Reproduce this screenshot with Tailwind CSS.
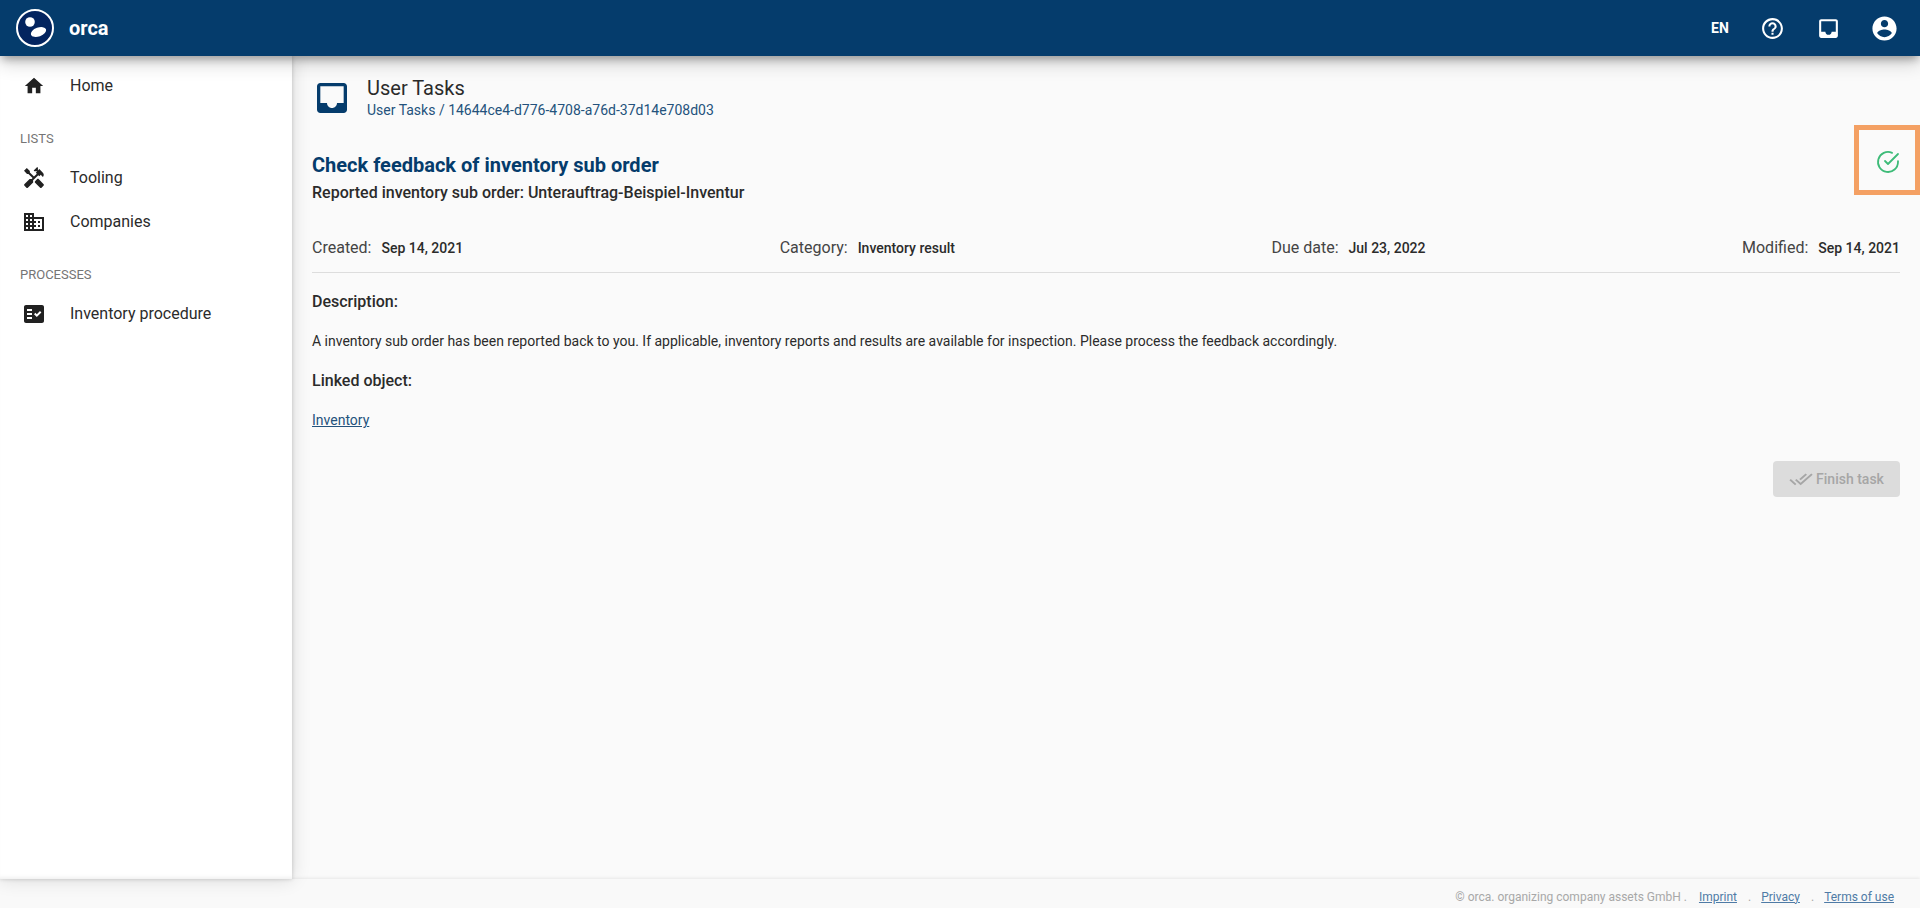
<!DOCTYPE html>
<html lang="en">
<head>
    <meta charset="UTF-8">
    <title>User Tasks</title>
    <script src="https://cdn.jsdelivr.net/npm/@tailwindcss/browser@4"></script>
</head>
<body class="h-[908px] overflow-hidden bg-[#fafafa] font-['Roboto',sans-serif] text-[#2b2b2b]">
    <!-- header -->
    <header class="relative z-20 h-[56px] bg-[#053c6c] text-white flex items-center justify-between shadow-[0_5px_8px_-2px_rgba(0,0,0,0.3),0_8px_18px_0_rgba(0,0,0,0.16)]">
        <div class="flex items-center pl-[16px]">
            <svg class="w-[39px] h-[39px]" viewBox="0 0 39 39">
                <circle cx="19" cy="19" r="18" fill="#03245f" stroke="#fff" stroke-width="2"/>
                <circle cx="14" cy="13" r="4.8" fill="#fff"/>
                <ellipse cx="22.5" cy="23" rx="8" ry="4.4" fill="#fff" transform="rotate(-20 22.5 23)"/>
            </svg>
            <span class="ml-[14px] text-[20px] font-bold">orca</span>
        </div>
        <div class="flex items-center pr-[8px]">
            <span class="w-[56px] pl-[8px] text-center text-[14px] font-bold">EN</span>
            <div class="w-[56px] flex justify-center">
                <svg class="w-[25px] h-[25px] fill-white" viewBox="0 0 24 24"><path d="M11 18h2v-2h-2v2zm1-16C6.48 2 2 6.48 2 12s4.48 10 10 10 10-4.48 10-10S17.52 2 12 2zm0 18c-4.41 0-8-3.59-8-8s3.59-8 8-8 8 3.59 8 8-3.59 8-8 8zm0-14c-2.21 0-4 1.79-4 4h2c0-1.1.9-2 2-2s2 .9 2 2c0 2-3 1.75-3 5h2c0-2.25 3-2.5 3-5 0-2.21-1.79-4-4-4z"/></svg>
            </div>
            <div class="w-[56px] flex justify-center">
                <svg class="w-[25px] h-[25px] fill-white" viewBox="0 0 24 24"><path d="M19 3H4.99c-1.11 0-1.98.89-1.98 2L3 19c0 1.1.88 2 1.99 2H19c1.1 0 2-.9 2-2V5c0-1.11-.9-2-2-2zm0 12h-4c0 1.66-1.35 3-3 3s-3-1.34-3-3H4.99V5H19v10z"/></svg>
            </div>
            <div class="w-[56px] flex justify-center">
                <svg class="w-[29px] h-[29px] fill-white" viewBox="0 0 24 24"><path d="M12 2C6.48 2 2 6.48 2 12s4.48 10 10 10 10-4.48 10-10S17.52 2 12 2zm0 3c1.66 0 3 1.34 3 3s-1.34 3-3 3-3-1.34-3-3 1.34-3 3-3zm0 14.2c-2.5 0-4.71-1.28-6-3.22.03-1.99 4-3.08 6-3.08 1.99 0 5.97 1.09 6 3.08-1.29 1.94-3.5 3.22-6 3.22z"/></svg>
            </div>
        </div>
    </header>

    <div class="flex h-[823px]">
        <!-- sidebar -->
        <aside class="relative z-10 w-[292px] shrink-0 bg-white shadow-[0_0_4px_rgba(0,0,0,0.18),0_0_18px_rgba(0,0,0,0.14),inset_0_-4px_4px_-3px_rgba(0,0,0,0.08)] text-[16px]">
            <a class="flex items-center h-[44px] mt-[8px] pl-[23px]">
                <svg class="w-[22px] h-[22px] fill-[#212121]" viewBox="0 0 24 24"><path d="M10 20v-6h4v6h5v-8h3L12 3 2 12h3v8z"/></svg>
                <span class="ml-[25px]">Home</span>
            </a>
            <div class="mt-[20px] pl-[20px] h-[22px] leading-[22px] text-[13px] text-[#757575]">LISTS</div>
            <a class="flex items-center h-[44px] mt-[6px] pl-[22px]">
                <svg class="w-[24px] h-[24px] fill-[#212121]" viewBox="0 0 24 24"><path d="M21.67 18.17l-5.3-5.3h-.99l-2.54 2.54v.99l5.3 5.3c.39.39 1.02.39 1.41 0l2.12-2.12c.39-.38.39-1.02 0-1.41z"/><path d="M17.34 10.19l1.41-1.41 2.12 2.12c1.17-1.17 1.17-3.07 0-4.24l-3.54-3.54-1.41 1.41V1.71l-.7-.71-3.54 3.54.71.71h2.83l-1.41 1.41 1.06 1.06-2.89 2.89-4.13-4.13V5.06L4.83 2.04 2 4.87 5.03 7.9h1.41l4.13 4.13-.85.85H7.61l-5.3 5.3c-.39.39-.39 1.02 0 1.41l2.12 2.12c.39.39 1.02.39 1.41 0l5.3-5.3v-2.12l5.15-5.15 1.05 1.05z"/></svg>
                <span class="ml-[24px]">Tooling</span>
            </a>
            <a class="flex items-center h-[44px] pl-[22px]">
                <svg class="w-[24px] h-[24px] fill-[#212121]" viewBox="0 0 24 24"><path d="M12 7V3H2v18h20V7H12zM6 19H4v-2h2v2zm0-4H4v-2h2v2zm0-4H4V9h2v2zm0-4H4V5h2v2zm4 12H8v-2h2v2zm0-4H8v-2h2v2zm0-4H8V9h2v2zm0-4H8V5h2v2zm10 12h-8v-2h2v-2h-2v-2h2v-2h-2V9h8v10zm-2-8h-2v2h2v-2zm0 4h-2v2h2v-2z"/></svg>
                <span class="ml-[24px]">Companies</span>
            </a>
            <div class="mt-[20px] pl-[20px] h-[22px] leading-[22px] text-[13px] text-[#757575]">PROCESSES</div>
            <a class="flex items-center h-[44px] mt-[6px] pl-[22px]">
                <svg class="w-[24px] h-[24px] fill-[#212121]" viewBox="0 0 24 24"><path d="M20 3H4c-1.1 0-2 .9-2 2v14c0 1.1.9 2 2 2h16c1.1 0 2-.9 2-2V5c0-1.1-.9-2-2-2zM10 17H5v-2h5v2zm0-4H5v-2h5v2zm0-4H5V7h5v2zm4.82 6L12 12.16l1.41-1.41 1.41 1.42L17.99 9l1.42 1.42L14.82 15z"/></svg>
                <span class="ml-[24px]">Inventory procedure</span>
            </a>
        </aside>

        <!-- content -->
        <main class="flex-1 px-[20px] pt-[22px]">
            <div class="flex items-center h-[40px]">
                <svg class="w-[40px] h-[40px] fill-[#053c6c]" viewBox="0 0 24 24"><path d="M19 3H4.99c-1.11 0-1.98.89-1.98 2L3 19c0 1.1.88 2 1.99 2H19c1.1 0 2-.9 2-2V5c0-1.11-.9-2-2-2zm0 12h-4c0 1.66-1.35 3-3 3s-3-1.34-3-3H4.99V5H19v10z"/></svg>
                <div class="ml-[15px]">
                    <div class="text-[20px] leading-[24px]">User Tasks</div>
                    <div class="text-[14px] leading-[20px] text-[#24527c]">User Tasks / 14644ce4-d776-4708-a76d-37d14e708d03</div>
                </div>
            </div>

            <h1 class="mt-[33px] text-[20px] leading-[28px] font-bold text-[#053c6c]">Check feedback of inventory sub order</h1>
            <div class="mt-[2px] text-[16px] leading-[24px] font-medium">Reported inventory sub order: Unterauftrag-Beispiel-Inventur</div>

            <div class="mt-[31px] pb-[12px] border-b border-[#dddddd] flex justify-between items-baseline">
                <div><span class="text-[16px] text-[#444444]">Created:</span><span class="ml-[10px] text-[14px] font-medium">Sep 14, 2021</span></div>
                <div><span class="text-[16px] text-[#444444]">Category:</span><span class="ml-[10px] text-[14px] font-medium">Inventory result</span></div>
                <div><span class="text-[16px] text-[#444444]">Due date:</span><span class="ml-[10px] text-[14px] font-medium">Jul 23, 2022</span></div>
                <div><span class="text-[16px] text-[#444444]">Modified:</span><span class="ml-[10px] text-[14px] font-medium">Sep 14, 2021</span></div>
            </div>

            <div class="mt-[17px] text-[16px] leading-[24px] font-medium">Description:</div>
            <p class="mt-[17px] text-[14px] leading-[20px]">A inventory sub order has been reported back to you. If applicable, inventory reports and results are available for inspection. Please process the feedback accordingly.</p>
            <div class="mt-[18px] text-[16px] leading-[24px] font-medium">Linked object:</div>
            <a class="block mt-[17px] text-[14px] leading-[20px] text-[#24527c] underline">Inventory</a>

            <div class="mt-[31px] flex justify-end">
                <button class="w-[127px] h-[36px] rounded-[4px] bg-[#dcdcdc] text-[#a6a6a6] text-[14px] font-medium flex items-center justify-center gap-[3px]">
                    <svg class="w-[24px] h-[14px] fill-[#a6a6a6]" viewBox="0 4 24 16" preserveAspectRatio="none"><path d="M18 7l-1.41-1.41-6.34 6.34 1.41 1.41L18 7zm4.24-1.41L11.66 16.17 7.48 12l-1.41 1.41L11.66 19l12-12-1.42-1.41zM.41 13.41L6 19l1.41-1.41L1.83 12 .41 13.41z"/></svg>
                    Finish task
                </button>
            </div>
        </main>
    </div>

    <footer class="relative z-[5] h-[29px] pt-[6px] bg-[#f9f9f9] shadow-[0_-1px_3px_rgba(0,0,0,0.08)] flex items-center justify-end pr-[26px] text-[12px] text-[#a8a8a8]">
        <span>© orca. organizing company assets GmbH .</span>
        <a class="ml-[12px] text-[#4f7ba6] underline">Imprint</a>
        <span class="ml-[11px]">.</span>
        <a class="ml-[10px] text-[#4f7ba6] underline">Privacy</a>
        <span class="ml-[11px]">.</span>
        <a class="ml-[10px] text-[#4f7ba6] underline">Terms of use</a>
    </footer>

    <!-- highlight drawn over the page -->
    <div class="absolute z-30 left-[1854px] top-[125px] w-[66px] h-[70px] border-[5px] border-[#f4a063] flex items-center justify-center">
        <svg class="w-[24px] h-[24px] mt-[4px] ml-[2px]" viewBox="0 0 24 24" fill="none" stroke="#3dbb78" stroke-width="1.8" stroke-linecap="round" stroke-linejoin="round"><path d="M22 11.08V12a10 10 0 1 1-5.93-9.14"/><path d="M22 4 12 14.01l-3-3"/></svg>
    </div>
</body>
</html>
